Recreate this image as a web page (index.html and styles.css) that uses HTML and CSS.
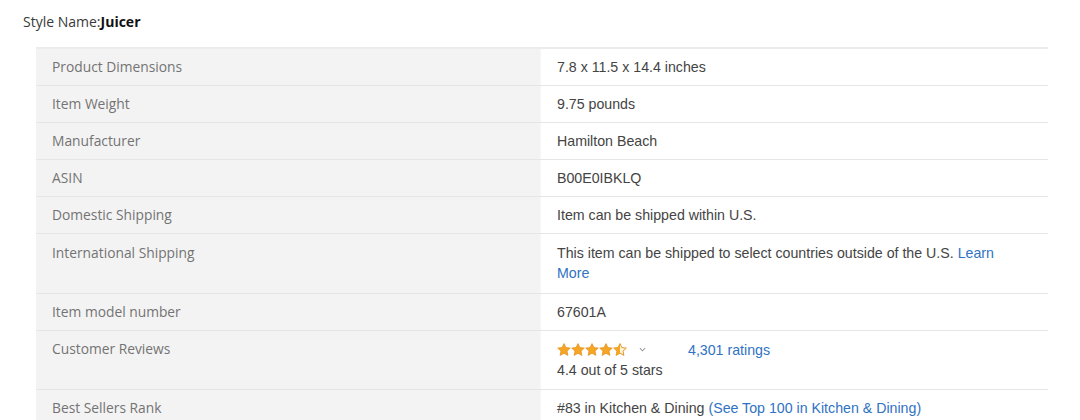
FILE: index.html
```html
<!DOCTYPE html>
<html lang="en">
<head>
<meta charset="utf-8">
<title>Product details</title>
<link rel="stylesheet" href="styles.css">
</head>
<body>
<div class="page">
  <div class="style-name">Style Name:<b>Juicer</b></div>
  <table class="details">
    <tr><th>Product Dimensions</th><td>7.8 x 11.5 x 14.4 inches</td></tr>
    <tr><th>Item Weight</th><td>9.75 pounds</td></tr>
    <tr><th>Manufacturer</th><td>Hamilton Beach</td></tr>
    <tr><th>ASIN</th><td>B00E0IBKLQ</td></tr>
    <tr><th>Domestic Shipping</th><td>Item can be shipped within U.S.</td></tr>
    <tr class="tall"><th>International Shipping</th><td>This item can be shipped to select countries outside of the U.S. <a href="#">Learn More</a></td></tr>
    <tr><th>Item model number</th><td>67601A</td></tr>
    <tr class="tall reviews"><th>Customer Reviews</th><td>
      <div class="rating-line">
        <span class="stars">
          <svg viewBox="0 0 14 13" width="14" height="13"><path class="star-full" d="M7 .6l1.9 4 4.4.5-3.3 3 .9 4.3L7 10.2 3.1 12.4 4 8.1.7 5.1l4.4-.5z"/></svg>
          <svg viewBox="0 0 14 13" width="14" height="13"><path class="star-full" d="M7 .6l1.9 4 4.4.5-3.3 3 .9 4.3L7 10.2 3.1 12.4 4 8.1.7 5.1l4.4-.5z"/></svg>
          <svg viewBox="0 0 14 13" width="14" height="13"><path class="star-full" d="M7 .6l1.9 4 4.4.5-3.3 3 .9 4.3L7 10.2 3.1 12.4 4 8.1.7 5.1l4.4-.5z"/></svg>
          <svg viewBox="0 0 14 13" width="14" height="13"><path class="star-full" d="M7 .6l1.9 4 4.4.5-3.3 3 .9 4.3L7 10.2 3.1 12.4 4 8.1.7 5.1l4.4-.5z"/></svg>
          <svg viewBox="0 0 14 13" width="14" height="13"><path class="star-empty" d="M7 .6l1.9 4 4.4.5-3.3 3 .9 4.3L7 10.2 3.1 12.4 4 8.1.7 5.1l4.4-.5z"/><path class="star-half" d="M7 .6V10.2L3.1 12.4 4 8.1.7 5.1l4.4-.5z"/></svg>
        </span>
        <svg class="chevron" viewBox="0 0 8 5" width="7" height="5"><path d="M1 1l3 3 3-3"/></svg>
        <a href="#" class="ratings">4,301 ratings</a>
      </div>
      <div>4.4 out of 5 stars</div>
    </td></tr>
    <tr><th>Best Sellers Rank</th><td>#83 in Kitchen &amp; Dining <a href="#">(See Top 100 in Kitchen &amp; Dining)</a></td></tr>
  </table>
</div>
</body>
</html>
```

FILE: styles.css
```css
html, body {
  margin: 0;
  padding: 0;
  background: #ffffff;
}

.page {
  padding: 12px 32px 0 23px;
}

.style-name {
  font-family: "Open Sans", "Noto Sans", sans-serif;
  font-size: 14px;
  line-height: 20px;
  color: #3a3a3a;
  margin-bottom: 15px;
}

.style-name b {
  font-weight: 700;
  color: #111111;
}

.details {
  width: 1012px;
  margin-left: 13px;
  border-collapse: collapse;
  border-top: 2px solid #ececec;
}

.details th,
.details td {
  padding: 8px 16px 8px 16px;
  line-height: 20px;
  vertical-align: top;
  text-align: left;
  border-bottom: 1px solid #e6e6e6;
}

.details th {
  width: 472px;
  background: #f3f3f3;
  font-family: "Open Sans", "Noto Sans", sans-serif;
  font-weight: 400;
  font-size: 13.8px;
  color: #737373;
}

.details td {
  background: #ffffff;
  font-family: "Liberation Sans", Arial, sans-serif;
  font-size: 14.2px;
  color: #444444;
  border-left: 1px solid #f6f6f6;
  padding-right: 30px;
}

.details tr.tall th,
.details tr.tall td {
  padding-top: 9px;
  padding-bottom: 10px;
}

.details tr.reviews th,
.details tr.reviews td {
  padding-top: 8px;
  padding-bottom: 9px;
}

.details a {
  color: #3072c4;
  text-decoration: none;
}

.rating-line {
  display: flex;
  align-items: center;
  height: 21px;
}

.stars {
  display: flex;
  gap: 0;
}

.stars svg {
  display: block;
}

.star-full {
  fill: #f6a623;
  stroke: #e28b14;
  stroke-width: 0.7;
}

.star-empty {
  fill: #fff3d6;
  stroke: #e28b14;
  stroke-width: 0.9;
}

.star-half {
  fill: #f6a623;
}

.chevron {
  margin-left: 12px;
  fill: none;
  stroke: #9a9a9a;
  stroke-width: 1.2;
}

.ratings {
  margin-left: 42px;
}
```
